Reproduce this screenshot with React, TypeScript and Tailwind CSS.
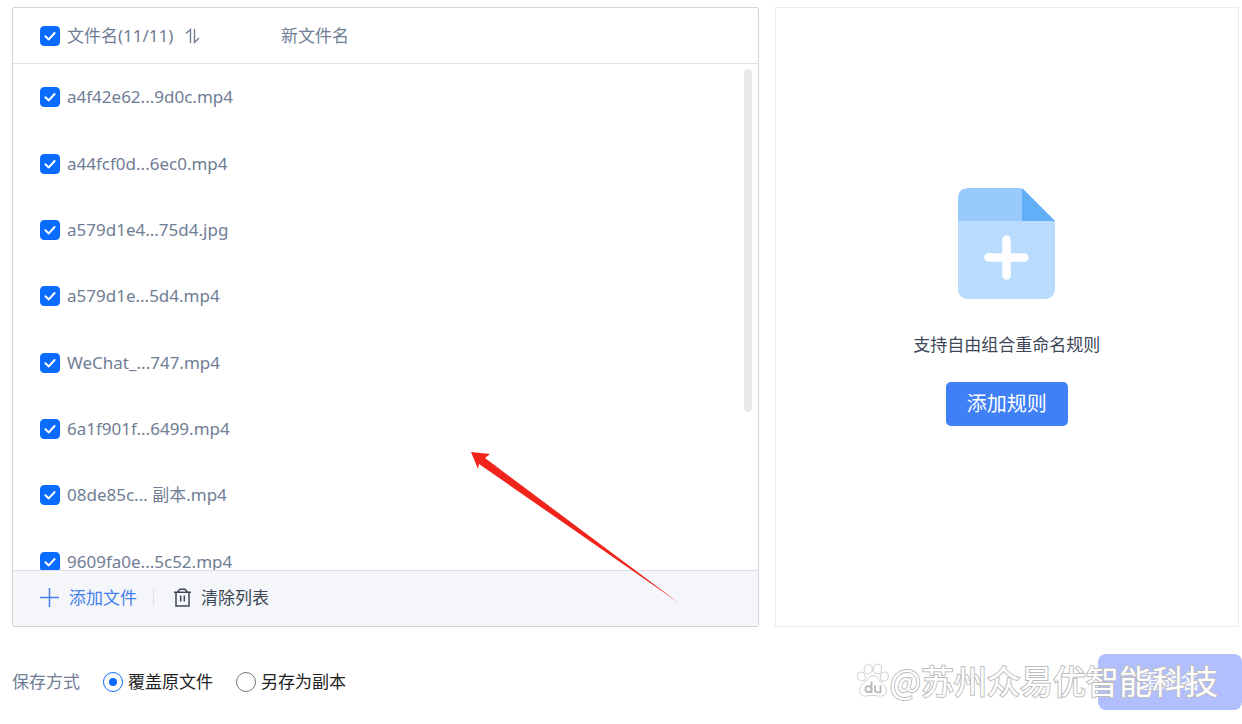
import { useState } from "react";

const files = [
  "a4f42e62...9d0c.mp4",
  "a44fcf0d...6ec0.mp4",
  "a579d1e4...75d4.jpg",
  "a579d1e...5d4.mp4",
  "WeChat_...747.mp4",
  "6a1f901f...6499.mp4",
  "08de85c... 副本.mp4",
  "9609fa0e...5c52.mp4",
];

function Check({ label, checked, onChange }: { label: string; checked: boolean; onChange: () => void }) {
  return (
    <label className="flex items-center gap-[7px] whitespace-nowrap">
      <span className="grid size-5 shrink-0">
        <input
          type="checkbox"
          checked={checked}
          onChange={onChange}
          className="peer col-start-1 row-start-1 size-5 appearance-none rounded-[4px] border border-[#9aa3b2] checked:border-[#0a6cff] checked:bg-[#0a6cff]"
        />
        <svg
          viewBox="0 0 20 20"
          className="pointer-events-none col-start-1 row-start-1 hidden size-5 peer-checked:block"
          fill="none"
          stroke="#fff"
          strokeWidth="2"
          strokeLinecap="round"
          strokeLinejoin="round"
        >
          <path d="M5.4 10.2 8.8 13.4 14.6 7" />
        </svg>
      </span>
      {label}
    </label>
  );
}

function Radio({ label, checked, onChange }: { label: string; checked: boolean; onChange: () => void }) {
  return (
    <label className="flex items-center gap-[5px] whitespace-nowrap text-[#222]">
      <span className="grid size-5 shrink-0 place-items-center">
        <input
          type="radio"
          name="save-mode"
          checked={checked}
          onChange={onChange}
          className="peer col-start-1 row-start-1 size-5 appearance-none rounded-full border border-[#777] checked:border-[#0a6cff]"
        />
        <span className="pointer-events-none col-start-1 row-start-1 hidden size-2 rounded-full bg-[#0a6cff] peer-checked:block" />
      </span>
      {label}
    </label>
  );
}

function Watermark() {
  return (
    <div className="pointer-events-none absolute top-1 right-6 flex items-center gap-px">
      <svg viewBox="0 0 32 34" className="h-[34px] w-8" fill="#fff" stroke="#cfcfcf" strokeWidth="1">
        <ellipse cx="4.5" cy="13.5" rx="3.9" ry="4.6" transform="rotate(-15 4.5 13.5)" />
        <ellipse cx="11.3" cy="6" rx="4.1" ry="4.9" />
        <ellipse cx="20.5" cy="6" rx="4.1" ry="4.9" transform="rotate(8 20.5 6)" />
        <ellipse cx="27.3" cy="13.5" rx="3.9" ry="4.6" transform="rotate(15 27.3 13.5)" />
        <path d="M16 12.5c3.500 0 5 3 7 5.500 2.500 2.800 6.500 5 6.500 9.500 0 4-3 5.500-6 5.500-2.800 0-4.500-.6-7.500-.6s-4.700.6-7.500.6c-3 0-6-1.500-6-5.500 0-4.500 4-6.700 6.500-9.500 2-2.500 3.500-5.500 7-5.500Z" />
        <g fill="none" stroke="#b8b8b8" strokeWidth="1.800">
          <path d="M14.500 18.500v11.500" />
          <circle cx="11.500" cy="26.200" r="3" />
          <path d="M18 22.300v4.500q0 2.500 2.500 2.500h3M23.500 22.300v7.700" />
        </g>
      </svg>
      <span className="font-['Noto_Sans_CJK_SC',sans-serif] text-[33px] leading-[44px] whitespace-nowrap text-white [-webkit-text-stroke:2px_#bdbdbd] [paint-order:stroke_fill]">
        @苏州众易优智能科技
      </span>
    </div>
  );
}

export default function App() {
  const [selected, setSelected] = useState(files.map(() => true));
  const [mode, setMode] = useState("overwrite");
  const all = selected.every(Boolean);

  return (
    <div className="flex flex-col pt-[7px] pl-3 font-['Noto_Sans','Noto_Sans_CJK_SC',sans-serif] text-[17px] leading-6 text-[#6f7d95]">
      <main className="flex gap-4 pr-[3px]">
        <section className="relative flex h-[620px] flex-[747] flex-col rounded-xs border border-[#d2d4d8]">
          <div className="min-h-0 flex-1 overflow-hidden">
            <table className="h-[587px] w-full table-fixed border-separate border-spacing-0 text-left">
              <thead>
                <tr>
                  <th className="h-14 w-[268px] border-b border-[#e3e3e3] pl-[27px] font-normal">
                    <div className="flex items-center gap-3">
                      <Check
                        label="文件名(11/11)"
                        checked={all}
                        onChange={() => setSelected(files.map(() => !all))}
                      />
                      <button type="button" aria-label="排序">
                        <svg viewBox="0 0 16 16" className="size-4" fill="none" stroke="currentColor" strokeWidth="1.400">
                          <path d="M1 5.500 5.500 1.500v13.500M9.500 1v13.500L14 10" />
                        </svg>
                      </button>
                    </div>
                  </th>
                  <th className="h-14 border-b border-[#e3e3e3] font-normal">新文件名</th>
                </tr>
              </thead>
              <tbody>
                {files.map((name, i) => (
                  <tr key={name}>
                    <td className="pl-[27px]">
                      <Check
                        label={name}
                        checked={selected[i]}
                        onChange={() => setSelected(selected.map((v, j) => (j === i ? !v : v)))}
                      />
                    </td>
                    <td />
                  </tr>
                ))}
              </tbody>
            </table>
          </div>
          <div className="absolute top-[61px] right-[6px] h-[343px] w-2 rounded-full bg-[#e8e8e8]" />
          <footer className="flex h-14 items-center border-t border-[#dcdee2] bg-[#f5f6f9] pb-0.5 pl-[27px]">
            <button type="button" className="flex items-center gap-[10px] text-[#4680ee]">
              <svg viewBox="0 0 19 19" className="size-[19px]" stroke="currentColor" strokeWidth="1.500">
                <path d="M0 9.500h19M9.500 0v19" />
              </svg>
              添加文件
            </button>
            <span className="mr-5 ml-4 h-4 w-px bg-[#dcdfe5]" />
            <button type="button" className="flex items-center gap-[10px] text-[#3d4757]">
              <svg viewBox="0 0 17 19" className="h-[19px] w-[17px]" fill="none" stroke="currentColor" strokeWidth="1.500">
                <path d="M0 4.200h17M2 4.200V18h13V4.200M3.500 4 6 1.200h5L13.500 4M6.700 7.500v6M10.300 7.500v6" />
              </svg>
              清除列表
            </button>
          </footer>
          <svg
            viewBox="0 0 208 151"
            className="pointer-events-none absolute top-[444px] left-[458px] h-[151px] w-[208px]"
            fill="#f0241b"
          >
            <path d="M0 0 19 2 14 6 208 151 8 12 7 17Z" />
          </svg>
        </section>
        <aside className="flex flex-[464] flex-col items-center border border-[#ebebeb] pt-[180px]">
          <svg viewBox="0 0 97 111" className="h-[111px] w-[97px]">
            <path d="M0 33V11Q0 0 11 0H61Q64 0 66 2L97 33Z" fill="#98cbfc" />
            <path d="M64 0Q65 1 97 33H64Z" fill="#62aef7" />
            <path d="M0 33H97V100Q97 111 86 111H11Q0 111 0 100Z" fill="#b9dcfc" />
            <path d="M48.500 51.500v36M30.500 69.500h36" stroke="#fff" strokeWidth="8.500" strokeLinecap="round" />
          </svg>
          <p className="mt-[34px] text-[#3d4757]">支持自由组合重命名规则</p>
          <button type="button" className="mt-[25px] h-11 rounded-[5px] bg-[#4080f7] px-[21px] text-xl text-white">
            添加规则
          </button>
        </aside>
      </main>
      <div className="relative mt-[27px] flex h-14 items-center">
        <fieldset className="contents">
          <legend className="contents">保存方式</legend>
          <div className="ml-[23px] flex gap-[23px]">
            <Radio label="覆盖原文件" checked={mode === "overwrite"} onChange={() => setMode("overwrite")} />
            <Radio label="另存为副本" checked={mode === "copy"} onChange={() => setMode("copy")} />
          </div>
        </fieldset>
        <button type="button" className="ml-auto h-14 w-36 rounded-lg bg-[#b1bfff] text-xl text-white">
          重命名
        </button>
        <Watermark />
      </div>
    </div>
  );
}
